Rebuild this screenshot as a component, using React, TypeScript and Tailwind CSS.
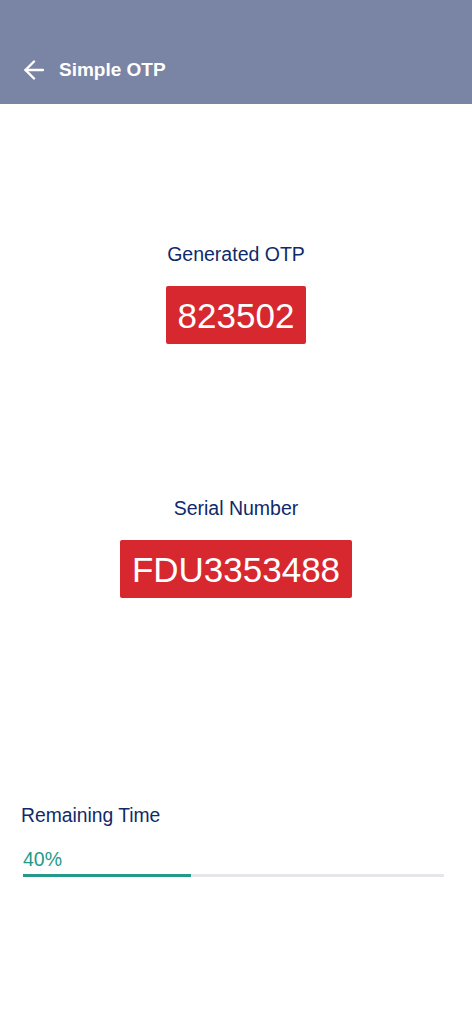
export default function App() {
  const progress = 40

  return (
    <div
      className="min-h-[1024px] w-full bg-white"
      style={{ fontFamily: '"Liberation Sans", Arial, sans-serif' }}
    >
      <div className="h-[104px] bg-[#7a84a5] flex items-end pb-[20px] pl-[24px]">
        <div className="flex items-center h-[28px]">
          <svg width="20" height="20" viewBox="0 0 20 20" fill="none" stroke="white" strokeWidth="2.4" strokeLinecap="round" strokeLinejoin="round">
            <path d="M19 10H1.5" />
            <path d="M10 1.5L1.5 10L10 18.5" />
          </svg>
          <span className="ml-[15px] text-[19px] font-bold text-white">Simple OTP</span>
        </div>
      </div>

      <div className="flex flex-col items-center">
        <p className="mt-[139px] text-[19.5px] leading-[22px] text-[#0f2a6a]">Generated OTP</p>
        <div className="mt-[21px] h-[58px] flex items-center px-[12px] bg-[#d7272f] rounded-[2px]">
          <span className="text-[35px] text-white leading-none">823502</span>
        </div>

        <p className="mt-[153px] text-[19.5px] leading-[22px] text-[#0f2a6a]">Serial Number</p>
        <div className="mt-[21px] h-[58px] flex items-center px-[12px] bg-[#d7272f] rounded-[2px]">
          <span className="text-[35px] text-white leading-none">FDU3353488</span>
        </div>
      </div>

      <div className="mt-[206px] pl-[21px] pr-[28px]">
        <p className="text-[19.3px] leading-[24px] text-[#0f2a6a]">Remaining Time</p>
        <p className="mt-[20px] ml-[2px] text-[19.5px] leading-[22px] text-[#26998a]">{progress}%</p>
        <div className="mt-[4px] ml-[2px] h-[3px] bg-[#e6e6ea]">
          <div className="h-full bg-[#26998a]" style={{ width: `${progress}%` }} />
        </div>
      </div>
    </div>
  )
}
